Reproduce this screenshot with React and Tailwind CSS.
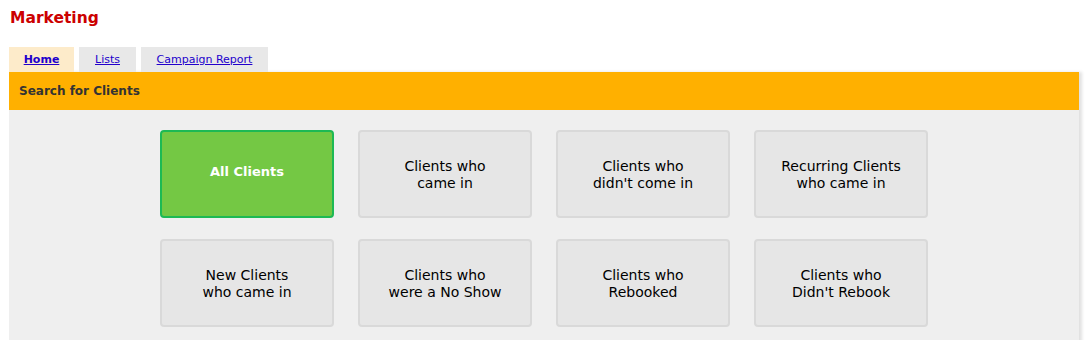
import React from "react";

const buttons = [
  ["All Clients"],
  ["Clients who", "came in"],
  ["Clients who", "didn't come in"],
  ["Recurring Clients", "who came in"],
  ["New Clients", "who came in"],
  ["Clients who", "were a No Show"],
  ["Clients who", "Rebooked"],
  ["Clients who", "Didn't Rebook"],
];

export default function App() {
  return (
    <div className="w-[1089px] h-[340px] overflow-hidden bg-white" style={{ fontFamily: "Verdana, 'DejaVu Sans', sans-serif" }}>
      <div className="pl-[9px] pr-[10px] pt-[8px]">
        <h1 className="text-[15.5px] leading-[20px] font-bold text-[#cc0000] pl-[1px]">Marketing</h1>
        <div className="flex gap-[5px] mt-[19px] h-[25px]">
          <a href="#" className="w-[65px] bg-[#fdebca] flex items-center justify-center pt-[2px] text-[11px] font-bold text-[#2200cc] underline">Home</a>
          <a href="#" className="w-[57px] bg-[#e8e8e8] flex items-center justify-center pt-[2px] text-[11px] text-[#2200cc] underline">Lists</a>
          <a href="#" className="w-[127px] bg-[#e8e8e8] flex items-center justify-center pt-[2px] text-[11px] text-[#2200cc] underline">Campaign Report</a>
        </div>
        <div className="shadow-[3px_0_3px_rgba(0,0,0,0.12)]">
          <div className="h-[38px] bg-[#ffb000] flex items-center pl-[10px] text-[12px] font-bold text-[#333333]">Search for Clients</div>
          <div className="bg-[#efefef] h-[240px] pt-[20px] flex justify-center">
            <div className="grid grid-cols-[repeat(4,174px)] gap-x-[24px] gap-y-[21px] content-start">
              {buttons.map((lines, i) => (
                <div
                  key={i}
                  className={
                    i === 0
                      ? "h-[88px] rounded-[4px] border-2 border-[#1db954] bg-[#74c844] flex flex-col items-center justify-center text-white font-bold text-[13px] leading-[17px] pb-[5px]"
                      : "h-[88px] rounded-[4px] border-2 border-[#d9d9d9] bg-[#e6e6e6] flex flex-col items-center justify-center text-black text-[14px] leading-[17px] pt-[2px]"
                  }
                >
                  {lines.map((l, j) => (
                    <span key={j}>{l}</span>
                  ))}
                </div>
              ))}
            </div>
          </div>
        </div>
      </div>
    </div>
  );
}
